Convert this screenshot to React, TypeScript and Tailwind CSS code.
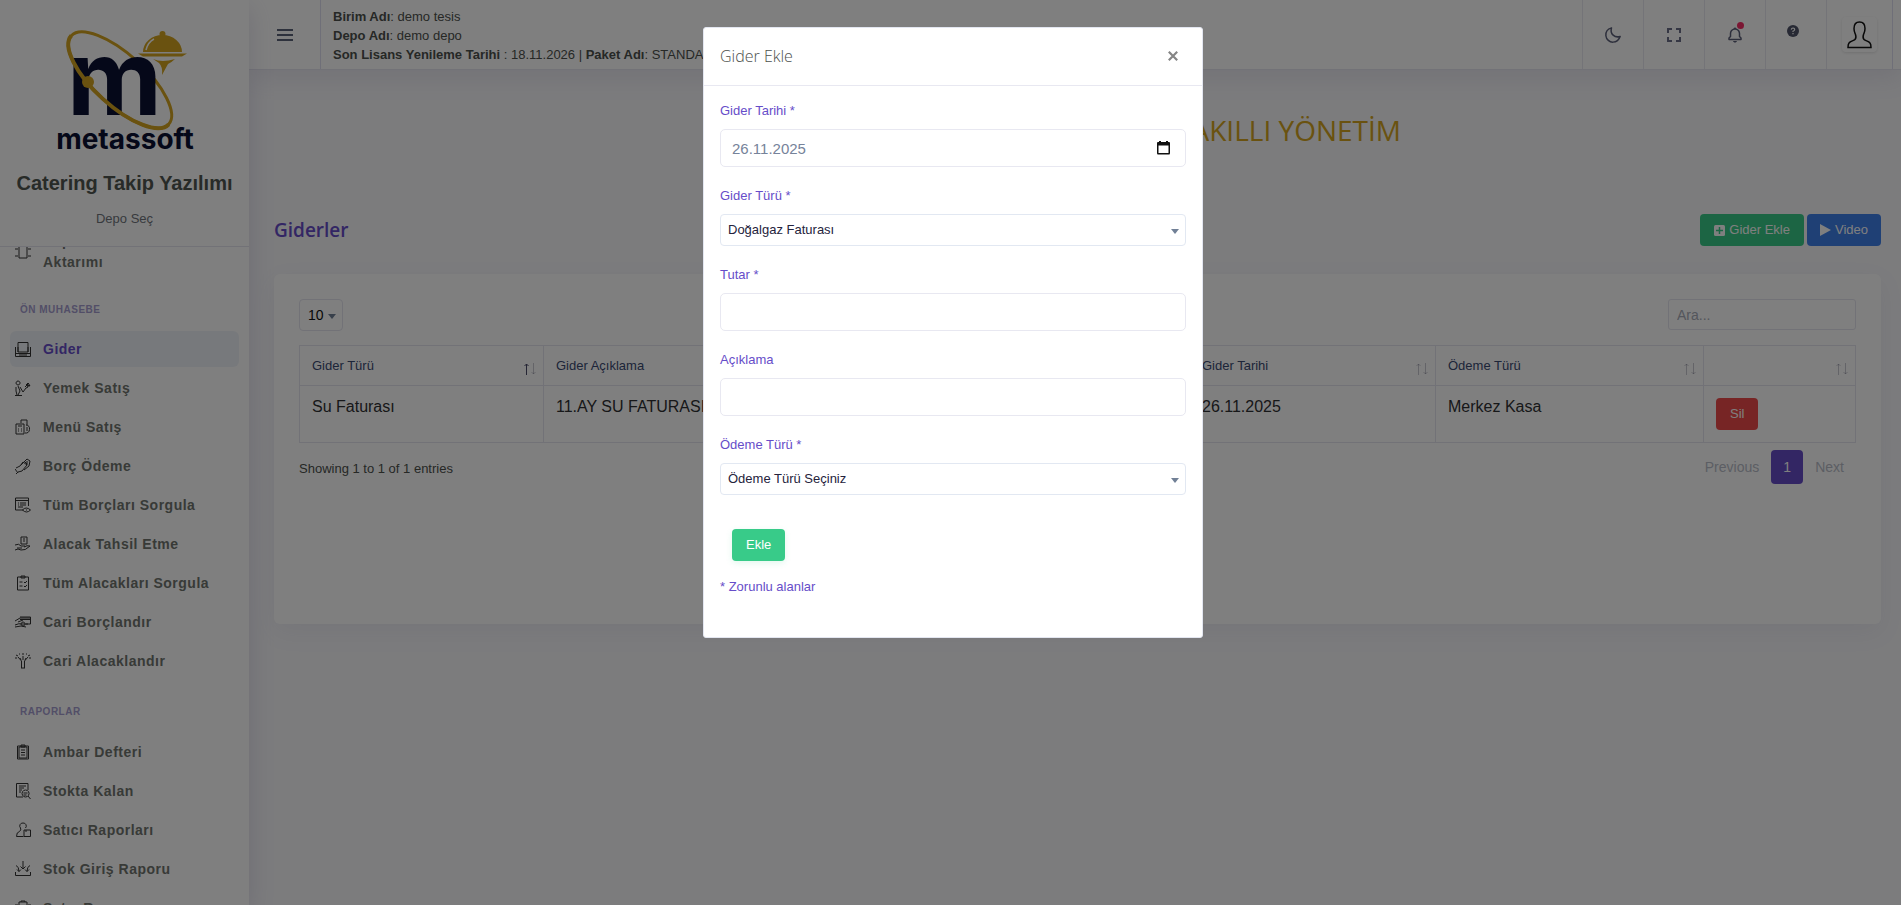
import { useState } from 'react';
import type { ReactNode } from 'react';

const menuIcons: Record<string, ReactNode> = {
  transfer: <path d="M4 2h8v12H4zM6 2V1h4v1M0 5h3M13 5h3M0 12h3M13 12h3" />,
  printer: <path d="M3 11V1.500h10V11M.5 6v9.500h15V6M3 6v5h10V6M1 12.500h14M4 14h8" />,
  waiter: <path d="M3 1a2 2 0 1 0 .1 0M3 6l2 5-2 4M5 7l3 5 3-4 2-1M1 7v4l1 4M0 15.500h7M10 7l4-4M12 7l3-2M11 5l2-2 2 3z" />,
  bill: <path d="M1 5h8v10H1zM6 4V1h6v5M3 7h4M3 10h1M6 10h1M3 12h1M6 12h1M11 6a4 4 0 1 1-1 8M12 8v4" />,
  pay: <path d="M1 10l4-2 3-4 4 3-5 6-4 1-2 2M6 7l6-6 3 2-1 5-5 4M10 4l2 2M12 3v4M0 11l3 4" />,
  list: <path d="M8 13H.5V1h13v8M.5 3.500h13M3 6h1M5 6h6M3 8h1M5 8h6M3 10h5M7.500 13q3.500-4 8 0-4 4-8 0M11 13h1" />,
  collect: <path d="M6 1h6v7H6zM8 3h2M8 5h2M0 9q4-2 6 1h4M0 14q3-2 6 0 4 1 9-4-3-1-6 1M2 12h5" />,
  check: <path d="M2.500 2h11v13h-11zM6 1h4v2H6zM4.500 7h3M4.500 11h3M9 7l1 1 2-2M9 11l1 1 2-2" />,
  card: <path d="M5 3h10.500v7H11M5 4h10M5 5.500h10M0 7l5-3M3 8l5-2M0 11q4-2 7-1h6M0 13l6-1 5 1M8 8a2 2 0 1 0 .1 0" />,
  share: <path d="M6.500 15V8L3 4M9.500 15V8l3.500-4M6 15h4M8 7V3M6 7L5 5M10 7l1-2M1 2l2 1M15 2l-2 1M7 1h2M0 5h2M14 5h2M4 1h1M11 1h1" />,
  clipboard: <path d="M2.500 2h11v13h-11zM4 3v11h8V3zM6 1h4v2H6zM6 6h4M6 8.500h4M6 11h4" />,
  search: <path d="M13 7V.5H1.500V14H8M4 3h7M4 5h5M4 7h3M4 9h2M10.500 7a3.500 3.500 0 1 0 .1 0M13 13l2.500 3M8.500 10h4M8.500 12h3" />,
  person: <path d="M8 1a3 3 0 0 0-2.500 5q1 2-1 3.500-3 .5-3 5h7M8 1a3 3 0 0 1 2.500 5M9 8h6.500v6.500H9zM11 8v2" />,
  inbox: <path d="M8 0v8M5.500 5.500L8 8l2.500-2.500M.5 11v3.500h15V11M1 4.500q3 1 3 6M2 8.500l2 2 2-2M15 4.500q-3 1-3 6M10 8.500l2 2 2-2" />,
};

const accounting = [
  { icon: 'printer', label: 'Gider' },
  { icon: 'waiter', label: 'Yemek Satış' },
  { icon: 'bill', label: 'Menü Satış' },
  { icon: 'pay', label: 'Borç Ödeme' },
  { icon: 'list', label: 'Tüm Borçları Sorgula' },
  { icon: 'collect', label: 'Alacak Tahsil Etme' },
  { icon: 'check', label: 'Tüm Alacakları Sorgula' },
  { icon: 'card', label: 'Cari Borçlandır' },
  { icon: 'share', label: 'Cari Alacaklandır' },
];

const reports = [
  { icon: 'clipboard', label: 'Ambar Defteri' },
  { icon: 'search', label: 'Stokta Kalan' },
  { icon: 'person', label: 'Satıcı Raporları' },
  { icon: 'inbox', label: 'Stok Giriş Raporu' },
  { icon: 'transfer', label: 'Satış Raporu' },
];

function Logo() {
  return (
    <svg className="block w-[150px] h-[128px] overflow-visible" viewBox="50 26 150 128" role="img" aria-label="metassoft">
      <ellipse cx="120" cy="80" rx="65.800" ry="25.500" fill="none" stroke="#d4a520" strokeWidth="3" transform="rotate(42.300 120 80)" />
      <text x="67" y="115" fontFamily="Inter, sans-serif" fontWeight="700" fontSize="104" fill="#0b1033">m</text>
      <path d="M168.700 124.300A65.800 25.500 42.300 0 1 71.300 35.700" fill="none" stroke="#d4a520" strokeWidth="4" />
      <circle cx="88" cy="82" r="6" fill="#d4a520" />
      <path d="M143 52a19.500 17 0 0 1 39 0zM138 53.500h49l-5 3h-39zM153 59q9 4 22 0-3 3-7 5l-6 11q1-8-3-12z" fill="#d4a520" />
      <circle cx="162.500" cy="34" r="3" fill="#d4a520" />
      <path d="M146 50q2-8 8-11" fill="none" stroke="#fff" strokeWidth="1.500" />
      <text x="125" y="149" textAnchor="middle" fontFamily="Inter, sans-serif" fontWeight="700" fontSize="28" fill="#0b1033">metassoft</text>
    </svg>
  );
}

function MenuItem({ icon, label, active }: { icon: string; label: string; active?: boolean }) {
  return (
    <a
      href="#"
      className={`flex items-center gap-3 mx-[10px] px-[5px] min-h-9 mb-[3px] rounded-md text-[14px] leading-[21px] font-bold tracking-[0.5px] ${
        active ? 'bg-[#eff3f8] text-[#664dc9]' : 'text-[#70756f]'
      }`}
    >
      <svg className="size-4 shrink-0" viewBox="0 0 16 16" fill="none" stroke="#333">
        {menuIcons[icon]}
      </svg>
      <span>{label}</span>
    </a>
  );
}

function Sidebar() {
  return (
    <aside className="w-[249px] shrink-0 h-screen flex flex-col bg-white shadow-[0_8px_24px_rgba(104,96,150,0.2)] z-10">
      <div className="flex flex-col items-center h-[247px] shrink-0 pt-[26px] border-b border-[#e4e4ee]">
        <Logo />
        <h1 className="mt-[15px] text-[20px] leading-7 font-bold text-[#505650] whitespace-nowrap">Catering Takip Yazılımı</h1>
        <a href="#" className="mt-3 text-[13px] leading-5 text-[#70757c]">Depo Seç</a>
      </div>
      <nav className="flex-1 overflow-hidden">
        <div className="-mt-6">
          <a href="#" className="flex items-center gap-3 mx-[10px] px-[5px] py-2 text-[14px] leading-[21px] font-bold tracking-[0.5px] text-[#70756f]">
            <svg className="size-4 shrink-0" viewBox="0 0 16 16" fill="none" stroke="#333">
              {menuIcons.transfer}
            </svg>
            <span>Depo<br />Aktarımı</span>
          </a>
          <h2 className="h-[50px] pt-[21px] pl-5 text-[10px] leading-4 font-bold tracking-[0.5px] text-[#a59dcf]">ÖN MUHASEBE</h2>
          {accounting.map((item, index) => (
            <MenuItem key={item.label} {...item} active={index === 0} />
          ))}
          <h2 className="h-[52px] pt-[22px] pl-5 text-[10px] leading-4 font-bold tracking-[0.5px] text-[#a59dcf]">RAPORLAR</h2>
          {reports.map((item) => (
            <MenuItem key={item.label} {...item} />
          ))}
        </div>
      </nav>
    </aside>
  );
}

function Header() {
  const cell = 'flex items-center justify-center w-[61px] h-full border-l border-[#e8e8f0]';
  return (
    <header className="flex h-[70px] bg-white border-b border-[#e4e4ee] shadow-[0_8px_24px_rgba(104,96,150,0.12)]">
      <button aria-label="Menü" className="w-[72px] flex items-center justify-center border-r border-[#dfdff0]">
        <svg className="w-4 h-3" viewBox="0 0 16 12" stroke="#5b6378" strokeWidth="2">
          <path d="M0 1h16M0 6h16M0 11h16" />
        </svg>
      </button>
      <div className="pl-3 pt-[7px] text-[13px] leading-[19px] text-[#4c504c] whitespace-nowrap">
        <p><b>Birim Adı</b>: demo tesis</p>
        <p><b>Depo Adı</b>: demo depo</p>
        <p><b>Son Lisans Yenileme Tarihi</b> : 18.11.2026 | <b>Paket Adı</b>: STANDART</p>
      </div>
      <div className="ml-auto mr-2 flex h-full border-r border-[#dfdff0]">
        <button aria-label="Koyu tema" className={cell}>
          <svg className="size-[18px]" viewBox="0 0 24 24" fill="none" stroke="#5b5f78" strokeWidth="2" strokeLinejoin="round">
            <path d="M10 2.500C5 4 2 8 2.500 13c.5 5 5 8.700 9.500 8.500 4.500-.2 8-3 9.500-7.500-7 2-14-3-11.500-11.500z" />
          </svg>
        </button>
        <button aria-label="Tam ekran" className={cell}>
          <svg className="size-[14px]" viewBox="0 0 14 14" fill="none" stroke="#6b6f88" strokeWidth="2">
            <path d="M1 5V1h4M9 1h4v4M13 9v4H9M5 13H1V9" />
          </svg>
        </button>
        <button aria-label="Bildirimler" className={cell}>
          <span className="relative">
            <svg className="size-[18px]" viewBox="0 0 24 24" fill="#5b5f78">
              <path d="M19 13.600V10c0-3.200-2.200-5.900-5.100-6.700C13.600 2.500 12.900 2 12 2s-1.600.5-1.900 1.300C7.200 4.100 5 6.800 5 10v3.600l-1.700 1.700c-.2.200-.3.400-.3.700v2c0 .6.400 1 1 1h16c.6 0 1-.4 1-1v-2c0-.3-.1-.5-.3-.7L19 13.600zM19 17H5v-.6l1.700-1.700c.2-.2.3-.4.3-.7v-4c0-2.800 2.200-5 5-5s5 2.200 5 5v4c0 .3.100.5.3.7l1.700 1.700v.6zM12 22c1.300 0 2.400-.8 2.800-2H9.200c.4 1.200 1.500 2 2.800 2z" />
            </svg>
            <span className="absolute -top-1 right-0 size-[7px] rounded-full bg-[#f72d66]" />
          </span>
        </button>
        <button aria-label="Yardım" className={`${cell} pb-2 pr-[6px]`}>
          <svg className="size-3" viewBox="0 0 12 12">
            <circle cx="6" cy="6" r="6" fill="#4f5368" />
            <path d="M4.300 4.600Q4.500 3 6 3q1.700.1 1.700 1.500Q7.600 5.500 6 6.200V7M6 8v1.200" fill="none" stroke="#fff" strokeWidth="1.200" />
          </svg>
        </button>
        <button aria-label="Profil" className="flex items-center justify-center w-[66px] border-l border-[#e8e8f0]">
          <span className="flex items-center justify-center size-[35px] rounded-sm shadow-[0_1px_3px_rgba(0,0,0,0.12)]">
            <svg className="w-[25px] h-7" viewBox="0 0 25 28" fill="none" stroke="#111" strokeWidth="1.500">
              <path d="M12.500 1C9 1 7 3.500 7 7.500c0 3 .8 4 1.500 6 .8 2.500.5 4-.5 5-1.500 1.500-4.500 1.500-6 3.500-.8 1-1 2.500-1 4.500h23c0-2-.2-3.500-1-4.500-1.500-2-4.500-2-6-3.500-1-1-1.300-2.500-.5-5 .7-2 1.500-3 1.500-6C18 3.500 16 1 12.500 1z" />
            </svg>
          </span>
        </button>
      </div>
    </header>
  );
}

function SortIcon({ asc }: { asc?: boolean }) {
  return (
    <svg className="w-3 h-3 shrink-0 mt-[6px]" viewBox="0 0 12 12" fill="none" stroke="#4a4a68">
      <path d="M2.500 12V1M.5 3l2-2 2 2" opacity={asc ? 1 : 0.3} />
      <path d="M9.500 0v11M7.500 9l2 2 2-2" opacity="0.300" />
    </svg>
  );
}

const columns = [
  { title: 'Gider Türü', width: 'w-[244px]' },
  { title: 'Gider Açıklama', width: '' },
  { title: 'Gider Tarihi', width: 'w-[246px]' },
  { title: 'Ödeme Türü', width: 'w-[268px]' },
  { title: '', width: 'w-[152px]' },
];

function ExpenseTable() {
  return (
    <table className="w-full table-fixed border-collapse mt-[14px] text-left">
      <thead>
        <tr className="h-10">
          {columns.map((col, index) => (
            <th key={index} className={`${col.width} border border-[#e4e4ee] pl-3 pr-[7px] font-normal text-[13px] text-[#3a4a72]`}>
              <span className="flex items-center justify-between">
                <span>{col.title}</span>
                <SortIcon asc={index === 0} />
              </span>
            </th>
          ))}
        </tr>
      </thead>
      <tbody>
        <tr className="align-top text-[16px] leading-6 text-[#2f3033]">
          <td className="border border-[#e4e4ee] px-3 pt-[9px]">Su Faturası</td>
          <td className="border border-[#e4e4ee] px-3 pt-[9px]">11.AY SU FATURASI</td>
          <td className="border border-[#e4e4ee] px-3 pt-[9px]">26.11.2025</td>
          <td className="border border-[#e4e4ee] px-3 pt-[9px]">Merkez Kasa</td>
          <td className="border border-[#e4e4ee] px-3 py-3">
            <button className="block h-8 px-[14px] rounded bg-[#ef4b4b] text-[13px] text-white">Sil</button>
          </td>
        </tr>
      </tbody>
    </table>
  );
}

function Caret() {
  return (
    <svg className="absolute right-[7px] top-1/2 -translate-y-px w-2 h-[5px] pointer-events-none" viewBox="0 0 8 5" fill="#718096">
      <path d="M0 0h8L4 5z" />
    </svg>
  );
}

function Field({ id, label, children }: { id: string; label: string; children: ReactNode }) {
  return (
    <div>
      <label htmlFor={id} className="block mb-2 text-[13px] leading-5 text-[#664dc9]">{label}</label>
      {children}
    </div>
  );
}

function ExpenseModal({ onClose }: { onClose: () => void }) {
  const [date, setDate] = useState('26.11.2025');
  const input = 'block w-full h-[38px] px-[11px] rounded-[5px] border border-[#e8e8f1] bg-white text-[15px] text-[#76839a] outline-none';
  const select = 'block w-full h-8 pl-[7px] pr-6 rounded border border-[#e2e8f2] bg-white text-[13px] text-[#25233c] appearance-none outline-none';

  return (
    <div className="fixed inset-0 z-20 flex items-start justify-center pl-[5px] pt-[27px] bg-black/50">
      <div role="dialog" aria-label="Gider Ekle" className="w-[500px] rounded-[3px] border border-[#e3e6f0] bg-white">
        <div className="flex items-center justify-between h-[58px] px-4 pb-px border-b border-[#e8e8f1]">
          <h3 className="font-['Open_Sans',sans-serif] font-light text-[16px] leading-5 text-[#4c504c]">Gider Ekle</h3>
          <button aria-label="Kapat" onClick={onClose} className="p-2">
            <svg className="size-[10px]" viewBox="0 0 10 10" stroke="#858585" strokeWidth="2.200">
              <path d="M.8.8l8.400 8.400M9.200.8L.8 9.200" />
            </svg>
          </button>
        </div>
        <form className="px-4 pt-[15px] pb-[41px]" onSubmit={(e) => e.preventDefault()}>
          <div className="flex flex-col gap-[19px]">
            <Field id="date" label="Gider Tarihi *">
              <div className="relative">
                <input id="date" value={date} onChange={(e) => setDate(e.target.value)} className={input} />
                <svg className="absolute right-4 top-3 w-[13px] h-[14px]" viewBox="0 0 13 14" fill="#111">
                  <path d="M2 0h2v1h5V0h2v1h1q1 0 1 1v10q0 1.500-1 1.500H1Q0 13.500 0 12V2q0-1 1-1h1zM1.500 4.500V12h10V4.500z" fillRule="evenodd" />
                </svg>
              </div>
            </Field>
            <Field id="type" label="Gider Türü *">
              <div className="relative">
                <select id="type" className={select}>
                  <option>Doğalgaz Faturası</option>
                </select>
                <Caret />
              </div>
            </Field>
            <Field id="amount" label="Tutar *">
              <input id="amount" className={input} />
            </Field>
            <Field id="note" label="Açıklama">
              <input id="note" className={input} />
            </Field>
            <Field id="payment" label="Ödeme Türü *">
              <div className="relative">
                <select id="payment" className={select}>
                  <option>Ödeme Türü Seçiniz</option>
                </select>
                <Caret />
              </div>
            </Field>
          </div>
          <button className="block mt-[34px] ml-3 h-8 px-[14px] rounded bg-[#38cb89] text-[13px] text-white shadow-[0_2px_6px_rgba(56,203,137,0.15)]">
            Ekle
          </button>
          <p className="mt-4 text-[13px] leading-[19px] text-[#664dc9]">* Zorunlu alanlar</p>
        </form>
      </div>
    </div>
  );
}

export default function App() {
  const [open, setOpen] = useState(true);

  return (
    <div className="flex h-screen overflow-hidden bg-[#f8f8fb] font-['Liberation_Sans',Arial,sans-serif]">
      <Sidebar />
      <div className="flex-1 min-w-0">
        <Header />
        <main className="pl-[25px] pr-5">
          <p className="pt-10 pr-[480px] text-right font-['Open_Sans',sans-serif] text-[28px] leading-10 text-[#d4a520]">
            AKILLI YÖNETİM
          </p>
          <div className="mt-16 flex items-center justify-between">
            <h2 className="font-['Open_Sans',sans-serif] font-semibold text-[19px] leading-8 text-[#664dc9]">Giderler</h2>
            <div className="flex gap-[3px] text-[13px] text-white">
              <button onClick={() => setOpen(true)} className="flex items-center gap-1 h-8 px-[14px] rounded bg-[#38cb89]">
                <svg className="size-[11px]" viewBox="0 0 11 11">
                  <rect width="11" height="11" rx="1.500" fill="#fff" />
                  <path d="M5.500 2v7M2 5.500h7" stroke="#38cb89" strokeWidth="1.500" />
                </svg>
                Gider Ekle
              </button>
              <button className="flex items-center gap-1 h-8 px-[13px] rounded bg-[#3e80eb]">
                <svg className="w-[11px] h-3" viewBox="0 0 11 12" fill="#fff">
                  <path d="M0 0l11 6-11 6z" />
                </svg>
                Video
              </button>
            </div>
          </div>
          <section className="mt-7 min-h-[350px] p-[25px] rounded-md bg-white shadow-[0_8px_24px_rgba(104,96,150,0.08)]">
            <div className="flex items-start justify-between">
              <div className="relative">
                <select aria-label="Kayıt sayısı" className="block w-11 h-8 pl-2 rounded border border-[#e4e4ee] bg-white text-[14px] text-[#111] appearance-none">
                  <option>10</option>
                </select>
                <Caret />
              </div>
              <input
                aria-label="Ara"
                placeholder="Ara..."
                className="w-[188px] h-[31px] px-2 rounded-[3px] border border-[#e4e4ee] bg-white text-[14px] placeholder:text-[#a8acb8]"
              />
            </div>
            <ExpenseTable />
            <div className="flex items-start justify-between mt-[7px]">
              <p className="pt-[9px] text-[13px] leading-5 text-[#4c504c]">Showing 1 to 1 of 1 entries</p>
              <div className="flex text-[14px] leading-[34px] text-[#b8bcc8]">
                <button className="px-3">Previous</button>
                <button className="w-8 h-[34px] rounded bg-[#664dc9] text-white">1</button>
                <button className="px-3">Next</button>
              </div>
            </div>
          </section>
        </main>
      </div>
      {open && <ExpenseModal onClose={() => setOpen(false)} />}
    </div>
  );
}
